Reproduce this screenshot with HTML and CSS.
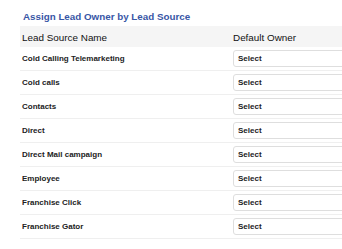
FILE: index.html
```html
<!DOCTYPE html>
<html lang="en">
<head>
    <meta charset="UTF-8">
    <title>Lead Assignment</title>
    <link rel="stylesheet" href="styles.css">
</head>
<body>
    <div class="container">
        <h2 class="title">Assign Lead Owner by Lead Source</h2>

        <div class="owner-table">
            <div class="row head">
                <div class="name">Lead Source Name</div>
                <div class="owner">Default Owner</div>
            </div>
            <div class="row">
                <div class="name">Cold Calling Telemarketing</div>
                <div class="owner"><div class="select">Select</div></div>
            </div>
            <div class="row">
                <div class="name">Cold calls</div>
                <div class="owner"><div class="select">Select</div></div>
            </div>
            <div class="row">
                <div class="name">Contacts</div>
                <div class="owner"><div class="select">Select</div></div>
            </div>
            <div class="row">
                <div class="name">Direct</div>
                <div class="owner"><div class="select">Select</div></div>
            </div>
            <div class="row">
                <div class="name">Direct Mail campaign</div>
                <div class="owner"><div class="select">Select</div></div>
            </div>
            <div class="row">
                <div class="name">Employee</div>
                <div class="owner"><div class="select">Select</div></div>
            </div>
            <div class="row">
                <div class="name">Franchise Click</div>
                <div class="owner"><div class="select">Select</div></div>
            </div>
            <div class="row">
                <div class="name">Franchise Gator</div>
                <div class="owner"><div class="select">Select</div></div>
            </div>
        </div>
    </div>
</body>
</html>
```

FILE: styles.css
```css
* {
    margin: 0;
    padding: 0;
    box-sizing: border-box;
}

body {
    font-family: 'Liberation Sans', Arial, sans-serif;
    background: white;
    color: #222;
    overflow: hidden;
}

.container {
    padding: 11px 0 0 20px;
    width: 460px;
}

.title {
    font-size: 9.8px;
    font-weight: bold;
    color: #3856a6;
    padding-left: 3px;
    height: 15px;
    line-height: 12px;
}

.row {
    display: flex;
    align-items: center;
    height: 24px;
    border-bottom: 1px solid #efefef;
}

.row.head {
    height: 21px;
    padding-top: 2px;
    background: #f5f5f5;
    border-bottom: none;
}

.row.head .name,
.row.head .owner {
    font-size: 9.9px;
    font-weight: normal;
    color: #111;
}

.name {
    width: 213px;
    padding-left: 2px;
    font-size: 8px;
    font-weight: bold;
    color: #222;
}

.owner {
    flex: 1;
}

.select {
    height: 17px;
    border: 1px solid #dedede;
    border-radius: 3px;
    background: white;
    font-size: 8px;
    font-weight: bold;
    color: #222;
    line-height: 15px;
    padding-left: 4px;
}
```
